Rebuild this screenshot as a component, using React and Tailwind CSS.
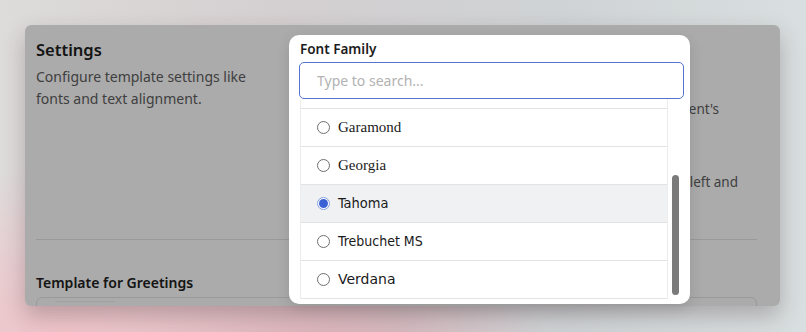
import { useState } from "react";

const fonts = [
  { name: "Arial", family: "font-['Liberation_Sans',sans-serif] text-[14px]" },
  { name: "Courier New", family: "font-['Liberation_Mono',monospace] text-[14px]" },
  { name: "Garamond", family: "font-['Liberation_Serif',serif] text-[15px]" },
  { name: "Georgia", family: "font-['Liberation_Serif',serif] text-[15px]" },
  { name: "Tahoma", family: "font-['DejaVu_Sans_Condensed','DejaVu_Sans',sans-serif] text-[14.5px]" },
  { name: "Trebuchet MS", family: "font-['DejaVu_Sans_Condensed','DejaVu_Sans',sans-serif] text-[14px]" },
  { name: "Verdana", family: "font-['DejaVu_Sans',sans-serif] text-[14px]" },
];

function Radio({ checked }) {
  if (checked) {
    return (
      <span className="w-[13px] h-[13px] rounded-full border border-[#86a0e4] bg-white flex items-center justify-center shrink-0">
        <span className="w-[9px] h-[9px] rounded-full bg-[#3a62d4]" />
      </span>
    );
  }
  return <span className="w-[13px] h-[13px] rounded-full border border-[#6e6e6e] bg-white shrink-0" />;
}

export default function App() {
  const [selected, setSelected] = useState("Tahoma");
  const [query, setQuery] = useState("");

  return (
    <div className="relative w-[806px] h-[332px] overflow-hidden pt-[25px] pl-[25px] font-['Noto_Sans',sans-serif] bg-[radial-gradient(ellipse_60%_70%_at_8%_100%,#efc4c9_0%,rgba(239,196,201,0)_70%),radial-gradient(ellipse_45%_55%_at_38%_110%,#d8a8b0_0%,rgba(216,168,176,0)_70%),linear-gradient(90deg,#dedbdb_0%,#d4cfd0_35%,#cfd3d5_70%,#d9dfe0_100%)]">
      {/* settings card, dimmed */}
      <div className="relative w-[755px] h-[281px] rounded-md bg-white overflow-hidden shadow-[0_10px_22px_rgba(60,40,45,0.28)]">
        <div className="pl-[11px] pr-[23px]">
          <div className="flex h-[215px] border-b border-[#e4e4e4] pt-[13px]">
            <div className="w-[228px]">
              <h2 className="text-[16.5px] leading-6 font-semibold text-[#202020]">Settings</h2>
              <p className="mt-[4px] text-[14px] leading-[22px] text-[#5e5e5e]">
                Configure template settings like fonts and text alignment.
              </p>
            </div>
            <div className="flex-1 flex flex-col text-[13.5px] text-[#5e5e5e]">
              <p className="mt-[61px] text-right whitespace-nowrap pr-[38px] leading-5">
                This font is used for the greeting in the recipient's
              </p>
              <p className="mt-[53px] text-right whitespace-nowrap pr-[19px] leading-5">
                Choose whether text is aligned to the left and
              </p>
            </div>
          </div>
          <h3 className="mt-[33px] text-[14px] leading-5 font-semibold text-[#202020]">Template for Greetings</h3>
          <div className="mt-[4px] h-[40px] rounded-md border border-[#e4e4e4] px-[18px] pt-[3px]">
            <div className="w-[60px] h-[6px] border-t border-[#f0f0f0]" />
          </div>
        </div>
        <div className="absolute inset-0 bg-black/[0.33]" />
      </div>

      {/* font family popover */}
      <div className="absolute left-[289px] top-[35px] w-[401px] h-[269px] rounded-[10px] bg-white shadow-[0_4px_14px_rgba(0,0,0,0.12)] pl-[10px] pr-[5px] pt-[5px]">
        <div className="pl-[1px] text-[13.5px] leading-[18px] font-semibold text-[#1c1c1c]">Font Family</div>
        <input
          value={query}
          onChange={(e) => setQuery(e.target.value)}
          placeholder="Type to search..."
          className="mt-[4px] block w-[385px] h-[37px] rounded-[5px] border-[1.5px] border-[#5674cf] pl-[17px] text-[14px] text-[#222] placeholder:text-[#b2b2b2] outline-none font-['Noto_Sans',sans-serif]"
        />
        <div className="flex h-[200px] w-[385px]">
          <div className="flex-1 ml-[1px] border-x border-[#ececec] overflow-hidden flex flex-col justify-end">
            {fonts.map((f) => (
              <div
                key={f.name}
                onClick={() => setSelected(f.name)}
                className={
                  "h-[38px] shrink-0 flex items-center gap-[8px] pl-[16px] border-b border-[#e3e3e3] cursor-pointer " +
                  (selected === f.name ? "bg-[#f0f1f3]" : "bg-white")
                }
              >
                <Radio checked={selected === f.name} />
                <span className={"text-[#1a1a1a] " + f.family}>{f.name}</span>
              </div>
            ))}
          </div>
          <div className="w-[16px] pl-[4px] pt-[76px]">
            <div className="w-[7px] h-[120px] rounded-full bg-[#7a7a7a]" />
          </div>
        </div>
      </div>
    </div>
  );
}
